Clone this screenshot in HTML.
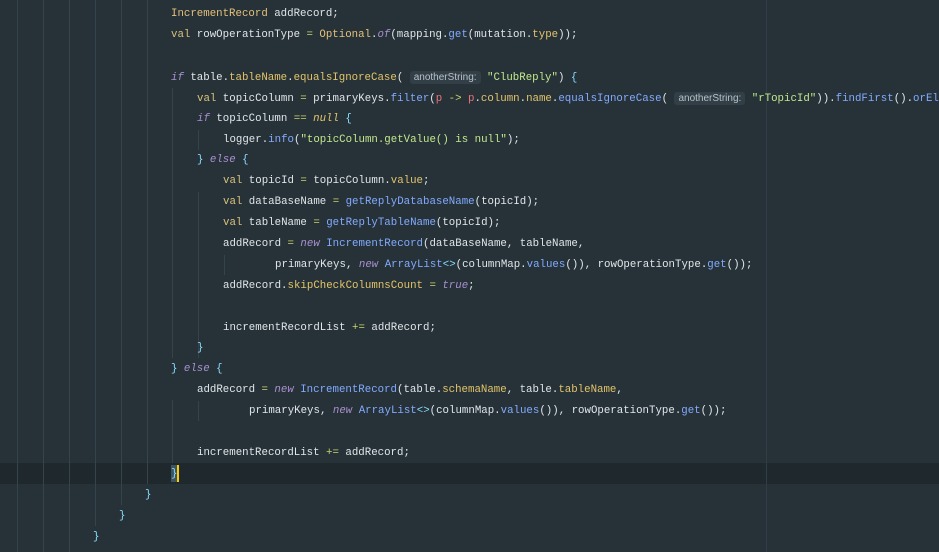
<!DOCTYPE html>
<html><head><meta charset="utf-8"><style>
body{margin:0;width:939px;height:552px;background:#263238;overflow:hidden;position:relative;font-family:"Liberation Mono",monospace;font-size:10.75px;color:#e0e6ea}
.l{position:absolute;left:0;white-space:pre;height:21px;line-height:21px;margin-top:1px}
.g{position:absolute;top:0;width:1px;background:#35434a}
.k{color:#d9c27a}.kw{color:#a98fd0;font-style:italic}.m{color:#82aaff}.f{color:#e3c46a}.s{color:#c3e88d}.t{color:#e5c07b}.b{color:#89ddff}.o{color:#c8d36f}
.h{font-family:"Liberation Sans",sans-serif;font-size:10px;background:#323f46;color:#b8c2c8;padding:1px 4px;border-radius:3px}
</style></head><body>
<div style="position:absolute;left:0;top:463px;width:939px;height:21px;background:#1f282d"></div>
<div class="g" style="left:17px;height:552px"></div>
<div class="g" style="left:43px;height:552px"></div>
<div class="g" style="left:69px;height:552px"></div>
<div class="g" style="left:95px;height:526px"></div>
<div class="g" style="left:121px;height:505px"></div>
<div class="g" style="left:147px;height:484px"></div>
<div class="g" style="left:172px;top:88px;height:270px"></div>
<div class="g" style="left:172px;top:400px;height:63px"></div>
<div class="g" style="left:198px;top:130px;height:20px"></div>
<div class="g" style="left:198px;top:192px;height:166px"></div>
<div class="g" style="left:224px;top:255px;height:20px"></div>
<div class="g" style="left:198px;top:401px;height:20px"></div>
<div class="g" style="left:766px;height:552px;background:#303d44"></div>
<div style="position:absolute;left:171px;top:465px;width:8px;height:17px;background:#3d5560"></div>
<div class="l" style="top:463px;left:171px"><span class="b">}</span></div>
<div style="position:absolute;left:177px;top:465px;width:2px;height:17px;background:#ffcc00"></div>
<div class="l" style="top:3px;left:171px"><span class="t">IncrementRecord</span> addRecord;</div>
<div class="l" style="top:24px;left:171px"><span class="k">val</span> rowOperationType <span class="o">=</span> <span class="t">Optional</span>.<span class="kw">of</span>(mapping.<span class="m">get</span>(mutation.<span class="f">type</span>));</div>
<div class="l" style="top:66px;left:171px"><span class="kw">if</span> table.<span class="f">tableName</span>.<span class="f">equalsIgnoreCase</span>( <span class="h">anotherString:</span> <span class="s">"ClubReply"</span>) <span class="b">{</span></div>
<div class="l" style="top:87px;left:197px"><span class="k">val</span> topicColumn <span class="o">=</span> primaryKeys.<span class="m">filter</span>(<span style="color:#f07178">p</span> <span class="o">-&gt;</span> <span style="color:#f07178">p</span>.<span class="f">column</span>.<span class="f">name</span>.<span class="m">equalsIgnoreCase</span>( <span class="h">anotherString:</span> <span class="s">"rTopicId"</span>)).<span class="m">findFirst</span>().<span class="m">orElse</span></div>
<div class="l" style="top:108px;left:197px"><span class="kw">if</span> topicColumn <span class="o">==</span> <span class="kw" style="color:#e3c46a">null</span> <span class="b">{</span></div>
<div class="l" style="top:129px;left:223px">logger.<span class="m">info</span>(<span class="s">"topicColumn.getValue() is null"</span>);</div>
<div class="l" style="top:149px;left:197px"><span class="b">}</span> <span class="kw">else</span> <span class="b">{</span></div>
<div class="l" style="top:170px;left:223px"><span class="k">val</span> topicId <span class="o">=</span> topicColumn.<span class="f">value</span>;</div>
<div class="l" style="top:191px;left:223px"><span class="k">val</span> dataBaseName <span class="o">=</span> <span class="m">getReplyDatabaseName</span>(topicId);</div>
<div class="l" style="top:212px;left:223px"><span class="k">val</span> tableName <span class="o">=</span> <span class="m">getReplyTableName</span>(topicId);</div>
<div class="l" style="top:233px;left:223px">addRecord <span class="o">=</span> <span class="kw">new</span> <span class="m">IncrementRecord</span>(dataBaseName, tableName,</div>
<div class="l" style="top:254px;left:275px">primaryKeys, <span class="kw">new</span> <span class="m">ArrayList</span><span class="b">&lt;&gt;</span>(columnMap.<span class="m">values</span>()), rowOperationType.<span class="m">get</span>());</div>
<div class="l" style="top:275px;left:223px">addRecord.<span class="f">skipCheckColumnsCount</span> <span class="o">=</span> <span class="kw">true</span>;</div>
<div class="l" style="top:317px;left:223px">incrementRecordList <span class="o">+=</span> addRecord;</div>
<div class="l" style="top:337px;left:197px"><span class="b">}</span></div>
<div class="l" style="top:358px;left:171px"><span class="b">}</span> <span class="kw">else</span> <span class="b">{</span></div>
<div class="l" style="top:379px;left:197px">addRecord <span class="o">=</span> <span class="kw">new</span> <span class="m">IncrementRecord</span>(table.<span class="f">schemaName</span>, table.<span class="f">tableName</span>,</div>
<div class="l" style="top:400px;left:249px">primaryKeys, <span class="kw">new</span> <span class="m">ArrayList</span><span class="b">&lt;&gt;</span>(columnMap.<span class="m">values</span>()), rowOperationType.<span class="m">get</span>());</div>
<div class="l" style="top:442px;left:197px">incrementRecordList <span class="o">+=</span> addRecord;</div>
<div class="l" style="top:484px;left:145px"><span class="b">}</span></div>
<div class="l" style="top:505px;left:119px"><span class="b">}</span></div>
<div class="l" style="top:526px;left:93px"><span class="b">}</span></div>
</body></html>
